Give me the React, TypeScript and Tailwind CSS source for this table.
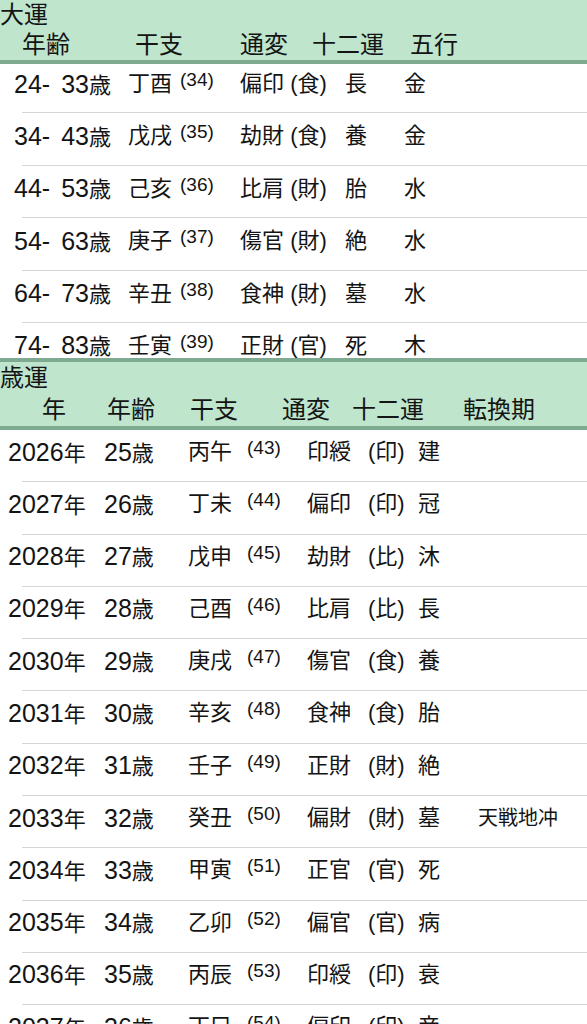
import React from "react";

const daiun = [
  ["24", "33", "丁酉", "34", "偏印", "食", "長", "金"],
  ["34", "43", "戊戌", "35", "劫財", "食", "養", "金"],
  ["44", "53", "己亥", "36", "比肩", "財", "胎", "水"],
  ["54", "63", "庚子", "37", "傷官", "財", "絶", "水"],
  ["64", "73", "辛丑", "38", "食神", "財", "墓", "水"],
  ["74", "83", "壬寅", "39", "正財", "官", "死", "木"],
];

const saiun = [
  ["2026", "25", "丙午", "43", "印綬", "印", "建", ""],
  ["2027", "26", "丁未", "44", "偏印", "印", "冠", ""],
  ["2028", "27", "戊申", "45", "劫財", "比", "沐", ""],
  ["2029", "28", "己酉", "46", "比肩", "比", "長", ""],
  ["2030", "29", "庚戌", "47", "傷官", "食", "養", ""],
  ["2031", "30", "辛亥", "48", "食神", "食", "胎", ""],
  ["2032", "31", "壬子", "49", "正財", "財", "絶", ""],
  ["2033", "32", "癸丑", "50", "偏財", "財", "墓", "天戦地冲"],
  ["2034", "33", "甲寅", "51", "正官", "官", "死", ""],
  ["2035", "34", "乙卯", "52", "偏官", "官", "病", ""],
  ["2036", "35", "丙辰", "53", "印綬", "印", "衰", ""],
  ["2037", "36", "丁巳", "54", "偏印", "印", "帝", ""],
];

function Sep() {
  return <div className="ml-[22px] h-px bg-[#d6d6d6]" />;
}

export default function App() {
  return (
    <div className="w-[587px] h-[1024px] overflow-hidden bg-white text-[#141414] font-['Liberation_Sans','Noto_Sans_CJK_JP',sans-serif]">
      {/* 大運 header */}
      <div className="bg-[#bfe5cd] border-b-4 border-[#7eaa91] h-[64px]">
        <div className="h-[29px] flex items-center text-[24px] leading-none">大運</div>
        <div className="h-[31px] flex items-center text-[24px] leading-none pl-[22px]">
          <div className="w-[113px] shrink-0">年齢</div>
          <div className="w-[105px] shrink-0">干支</div>
          <div className="w-[72px] shrink-0">通変</div>
          <div className="w-[98px] shrink-0">十二運</div>
          <div className="shrink-0">五行</div>
        </div>
      </div>

      <div className="h-[294px] overflow-hidden">
        <div className="-mt-[3px]">
          {daiun.map((r, i) => (
            <div key={i} className="h-[52.4px] flex flex-col">
              <div className="h-[51.4px]">
                <div className="h-[46px] flex items-center text-[22px] leading-none pl-[14px]">
                  <div className="w-[114px] shrink-0 whitespace-nowrap">
                    <span className="text-[25px]">{r[0]}-</span>
                    <span className="inline-block w-[11px]" />
                    <span className="text-[25px]">{r[1]}</span>歳
                  </div>
                  <div className="w-[52px] shrink-0">{r[2]}</div>
                  <div className="w-[60px] shrink-0 pb-[9px] text-[19px]">({r[3]})</div>
                  <div className="w-[105px] shrink-0 whitespace-pre">
                    {r[4]} ({r[5]})
                  </div>
                  <div className="w-[59px] shrink-0">{r[6]}</div>
                  <div className="shrink-0">{r[7]}</div>
                </div>
              </div>
              <Sep />
            </div>
          ))}
        </div>
      </div>

      {/* 歳運 header */}
      <div className="bg-[#bfe5cd] border-y-4 border-[#7eaa91] h-[72px]">
        <div className="h-[32px] flex items-center text-[24px] leading-none">歳運</div>
        <div className="h-[32px] flex items-center text-[24px] leading-none pl-[42px]">
          <div className="w-[65px] shrink-0">年</div>
          <div className="w-[83px] shrink-0">年齢</div>
          <div className="w-[92px] shrink-0">干支</div>
          <div className="w-[70px] shrink-0">通変</div>
          <div className="w-[111px] shrink-0">十二運</div>
          <div className="shrink-0">転換期</div>
        </div>
      </div>

      <div>
        {saiun.map((r, i) => (
          <div key={i} className="h-[52.3px] flex flex-col">
            <div className="h-[51.3px]">
              <div className="h-[44px] flex items-center text-[22px] leading-none pl-[8px]">
                <div className="w-[96px] shrink-0 whitespace-nowrap">
                  <span className="text-[25px]">{r[0]}</span>年
                </div>
                <div className="w-[84px] shrink-0 whitespace-nowrap">
                  <span className="text-[25px]">{r[1]}</span>歳
                </div>
                <div className="w-[59px] shrink-0">{r[2]}</div>
                <div className="w-[60px] shrink-0 pb-[9px] text-[19px]">({r[3]})</div>
                <div className="w-[61px] shrink-0">{r[4]}</div>
                <div className="w-[50px] shrink-0">({r[5]})</div>
                <div className="w-[60px] shrink-0">{r[6]}</div>
                <div className="shrink-0 text-[20px]">{r[7]}</div>
              </div>
            </div>
            <Sep />
          </div>
        ))}
      </div>
    </div>
  );
}
